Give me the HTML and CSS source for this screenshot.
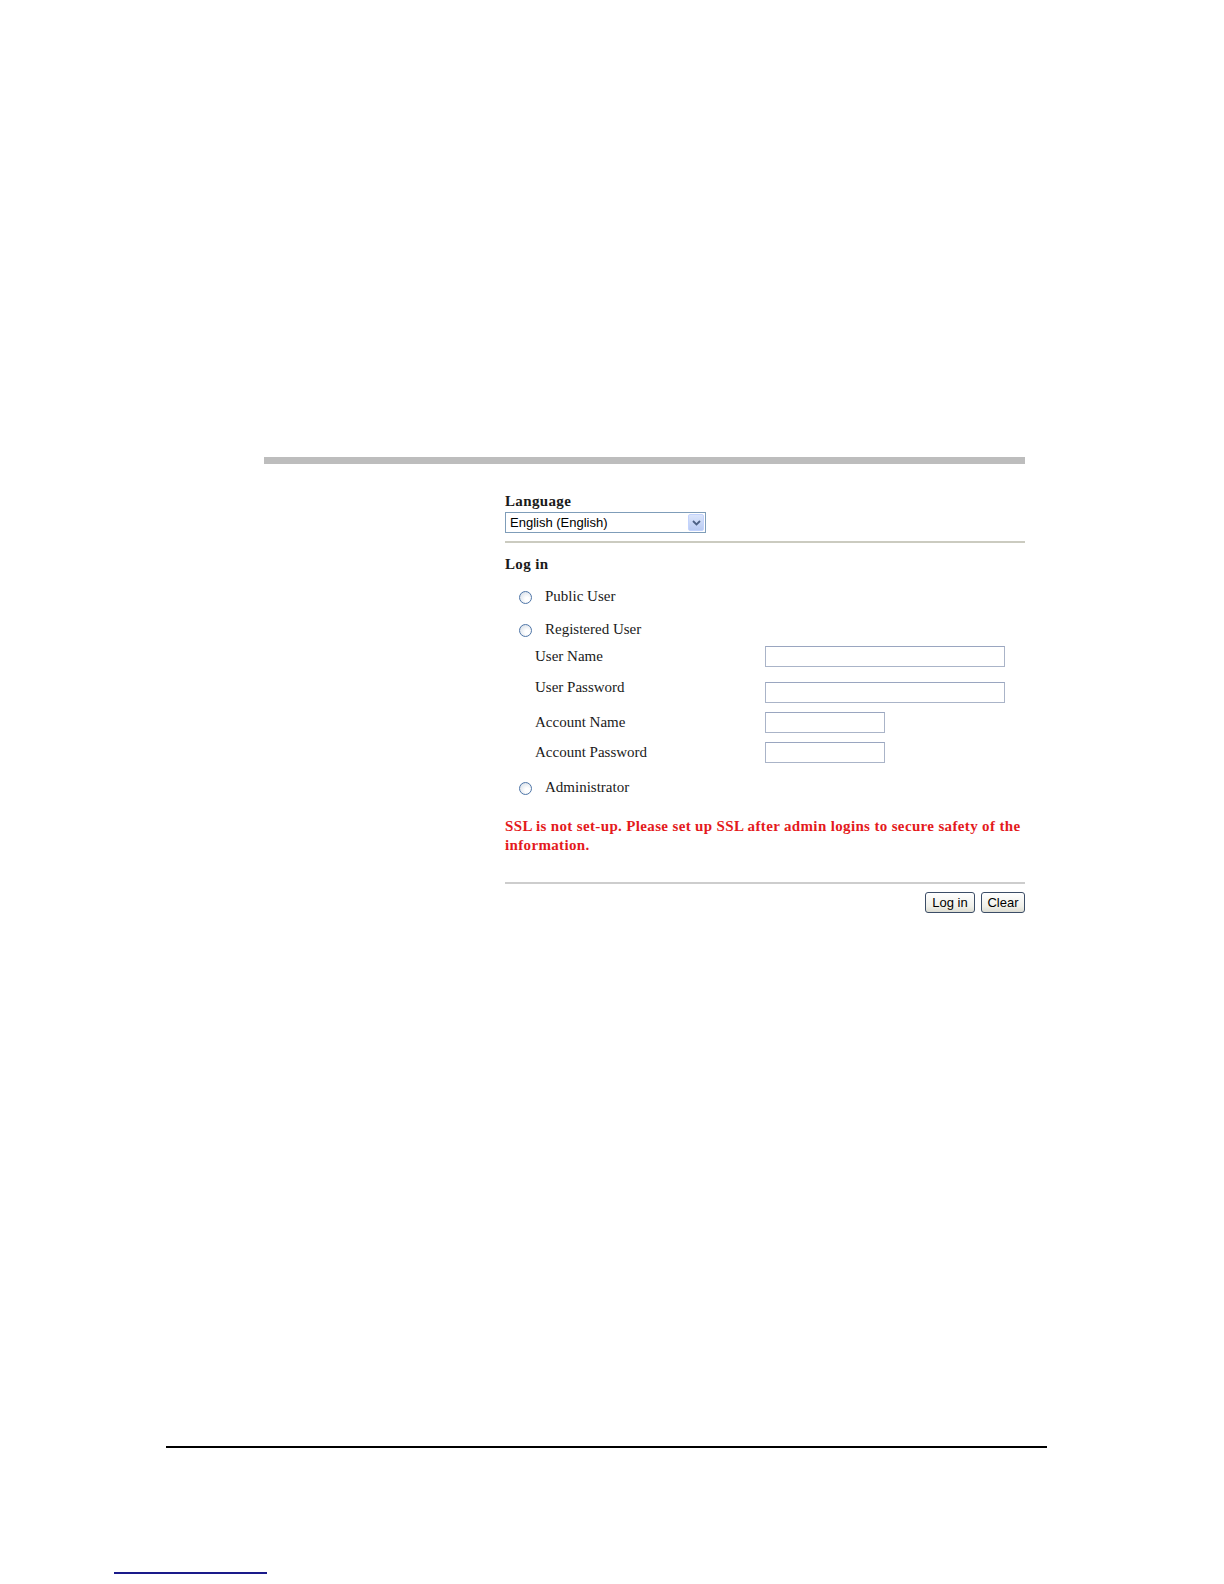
FILE: index.html
```html
<!DOCTYPE html>
<html>
<head>
<meta charset="utf-8">
<title>Log in</title>
<link rel="stylesheet" href="styles.css">
</head>
<body>
<div class="page">
  <div class="topbar"></div>
  <div class="form">
    <div class="title">Language</div>
    <div class="select">
      <span class="select-text">English (English)</span>
      <span class="select-btn">
        <svg width="9" height="6" viewBox="0 0 9 6"><path d="M1 1 L4.5 4.5 L8 1" fill="none" stroke="#4d6185" stroke-width="1.8"/></svg>
      </span>
    </div>
    <div class="sep sep-top"></div>
    <div class="title title-login">Log in</div>
    <div class="radio-row row-public"><span class="radio"></span><span class="radio-label">Public User</span></div>
    <div class="radio-row row-registered"><span class="radio"></span><span class="radio-label">Registered User</span></div>
    <div class="field row-f1"><span class="field-label">User Name</span><span class="input input-wide"></span></div>
    <div class="field row-f2"><span class="field-label label-up">User Password</span><span class="input input-wide"></span></div>
    <div class="field row-f3"><span class="field-label">Account Name</span><span class="input input-short"></span></div>
    <div class="field row-f4"><span class="field-label">Account Password</span><span class="input input-short"></span></div>
    <div class="radio-row row-admin"><span class="radio"></span><span class="radio-label">Administrator</span></div>
    <div class="message">SSL is not set-up. Please set up SSL after admin logins to secure safety of the information.</div>
    <div class="sep sep-bottom"></div>
    <div class="buttons">
      <span class="btn btn-login">Log in</span>
      <span class="btn btn-clear">Clear</span>
    </div>
  </div>
  <div class="footer-line"></div>
  <div class="link-line"></div>
</div>
</body>
</html>
```

FILE: styles.css
```css
html, body {
  margin: 0;
  padding: 0;
  background: #ffffff;
}
body {
  font-family: "Liberation Serif", "Times New Roman", serif;
  font-size: 15px;
  color: #1a1a1a;
}
.page {
  width: 1224px;
  display: flex;
  flex-direction: column;
}
.topbar {
  margin-top: 457px;
  margin-left: 264px;
  width: 761px;
  height: 7px;
  background: #bdbdbd;
}
.form {
  margin-left: 505px;
  width: 520px;
  display: flex;
  flex-direction: column;
}
.title {
  font-weight: bold;
  letter-spacing: 0.35px;
  line-height: 17px;
  height: 17px;
  margin-top: 29px;
}
.title-login {
  margin-top: 13px;
}
.select {
  margin-top: 2px;
  width: 201px;
  height: 21px;
  box-sizing: border-box;
  border: 1px solid #7f9db9;
  display: flex;
  align-items: center;
  justify-content: space-between;
  padding: 0 1px 0 4px;
  background: #fff;
}
.select-text {
  font-family: "Liberation Sans", Arial, sans-serif;
  font-size: 13px;
  color: #000;
}
.select-btn {
  width: 16px;
  height: 17px;
  box-sizing: border-box;
  border: 1px solid #c3d3fd;
  border-radius: 2px;
  background: linear-gradient(#dbe5fb, #b9cbf3);
  display: flex;
  align-items: center;
  justify-content: center;
}
.sep {
  height: 2px;
  background: #cbcbc0;
}
.sep-top {
  margin-top: 8px;
}
.sep-bottom {
  margin-top: 27px;
  background: #cdcdcd;
}
.radio-row {
  display: flex;
  align-items: center;
  height: 20px;
  margin-left: 14px;
}
.row-public { margin-top: 13px; }
.row-registered { margin-top: 13px; }
.row-admin { margin-top: 14px; }
.radio {
  width: 13px;
  height: 13px;
  box-sizing: border-box;
  border-radius: 50%;
  border: 1px solid #4f76a8;
  background: radial-gradient(circle at 65% 65%, #ffffff 20%, #dfe5ec 75%, #c9d2dc 100%);
  margin-top: 3px;
}
.radio-label {
  margin-left: 13px;
  line-height: 17px;
}
.field {
  display: grid;
  grid-template-columns: 230px auto;
  align-items: center;
  margin-left: 30px;
  height: 21px;
}
.row-f1 { margin-top: 7px; }
.row-f2 { margin-top: 15px; }
.row-f3 { margin-top: 9px; }
.row-f4 { margin-top: 9px; }
.field-label {
  line-height: 17px;
}
.label-up {
  align-self: start;
  margin-top: -3px;
}
.input {
  height: 21px;
  box-sizing: border-box;
  border: 1px solid #aab4c8;
  border-top-color: #9aa6c0;
  background: #fff;
}
.input-wide { width: 240px; }
.input-short { width: 120px; }
.message {
  margin-top: 20px;
  width: 525px;
  color: #e41a1c;
  font-weight: bold;
  letter-spacing: 0.35px;
  line-height: 19px;
}
.buttons {
  margin-top: 8px;
  display: flex;
  justify-content: flex-end;
  gap: 6px;
}
.btn {
  height: 21px;
  box-sizing: border-box;
  border: 1px solid #3c4d67;
  border-radius: 3px;
  background: linear-gradient(#ffffff, #f0f0ea 70%, #dcdcd2);
  font-family: "Liberation Sans", Arial, sans-serif;
  font-size: 13px;
  color: #000;
  display: flex;
  align-items: center;
  justify-content: center;
}
.btn-login { width: 50px; }
.btn-clear { width: 44px; }
.footer-line {
  margin-top: 533px;
  margin-left: 166px;
  width: 881px;
  height: 2px;
  background: #000;
}
.link-line {
  margin-top: 124px;
  margin-left: 114px;
  width: 153px;
  height: 2px;
  background: #1a1a8a;
}
```
